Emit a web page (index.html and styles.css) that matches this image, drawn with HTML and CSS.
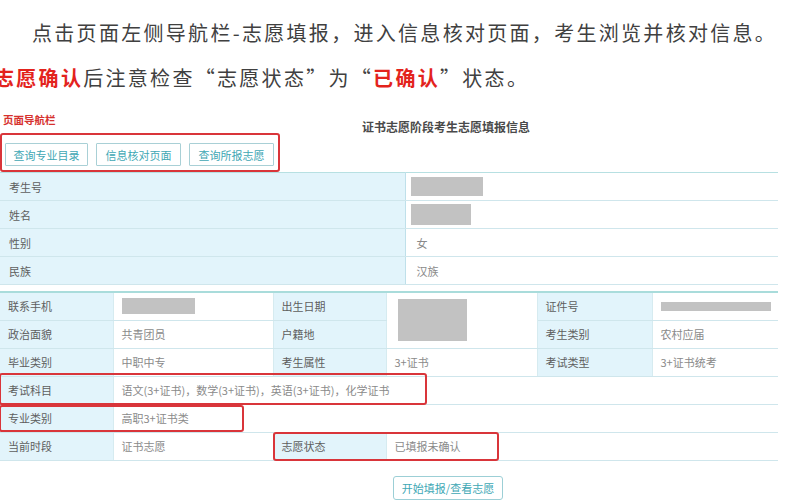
FILE: index.html
```html
<!DOCTYPE html>
<html lang="zh-CN">
<head>
<meta charset="utf-8">
<title>志愿填报信息</title>
<link rel="stylesheet" href="styles.css">
</head>
<body>
<div class="intro">
  <div class="line l1">点击页面左侧导航栏-志愿填报，进入信息核对页面，考生浏览并核对信息。</div>
  <div class="line l2"><b class="em">志愿确认</b>后注意检查“志愿状态”为“<b class="em">已确认</b>”状态。</div>
</div>
<div class="navhead">
  <div class="navlabel">页面导航栏</div>
  <div class="title">证书志愿阶段考生志愿填报信息</div>
</div>
<div class="navbox">
  <button class="navbtn w83">查询专业目录</button>
  <button class="navbtn">信息核对页面</button>
  <button class="navbtn">查询所报志愿</button>
</div>
<table class="t1">
  <colgroup><col class="c-l"><col></colgroup>
  <tr><td class="lab">考生号</td><td class="val redcell"><span class="redact r1"></span></td></tr>
  <tr><td class="lab">姓名</td><td class="val redcell"><span class="redact r2"></span></td></tr>
  <tr><td class="lab">性别</td><td class="val">女</td></tr>
  <tr><td class="lab">民族</td><td class="val">汉族</td></tr>
</table>
<div class="t2wrap">
  <table class="t2">
    <colgroup><col class="k1"><col class="k2"><col class="k3"><col class="k4"><col class="k5"><col class="k6"></colgroup>
    <tr><td class="lab">联系手机</td><td class="val"><span class="redact r3"></span></td><td class="lab">出生日期</td><td class="val redtall" rowspan="2"><span class="redact r4"></span></td><td class="lab">证件号</td><td class="val"><span class="redact r5"></span></td></tr>
    <tr><td class="lab">政治面貌</td><td class="val">共青团员</td><td class="lab">户籍地</td><td class="lab">考生类别</td><td class="val">农村应届</td></tr>
    <tr><td class="lab">毕业类别</td><td class="val">中职中专</td><td class="lab">考生属性</td><td class="val">3+证书</td><td class="lab">考试类型</td><td class="val">3+证书统考</td></tr>
    <tr><td class="lab">考试科目</td><td class="val" colspan="5">语文(3+证书)，数学(3+证书)，英语(3+证书)，化学证书</td></tr>
    <tr><td class="lab">专业类别</td><td class="val" colspan="5">高职3+证书类</td></tr>
    <tr><td class="lab">当前时段</td><td class="val">证书志愿</td><td class="lab">志愿状态</td><td class="val" colspan="3">已填报未确认</td></tr>
  </table>
  <div class="mark mark-a"></div>
  <div class="mark mark-b"></div>
  <div class="mark mark-c"></div>
</div>
<div class="actions"><button class="start">开始填报/查看志愿</button></div>
</body>
</html>
```
FILE: styles.css
```css
* { box-sizing: border-box; }
html, body { margin: 0; padding: 0; background: #fff; }
body { font-family: "Noto Sans CJK SC", "Noto Sans", sans-serif; overflow: hidden; width: 800px; height: 500px; }

.intro { padding-top: 10px; height: 100px; }
.line { font-size: 20px; line-height: 45px; letter-spacing: 2.3px; color: #404040; white-space: nowrap; }
.l1 { padding-left: 32px; }
.l2 { margin-left: -6px; }
.em { color: #e3231d; font-weight: bold; }

.navhead { display: grid; grid-template-columns: 362px 1fr; height: 33px; }
.navlabel { padding: 14px 0 0 3px; font-size: 10.5px; line-height: 12px; font-weight: bold; color: #d6312e; }
.title { padding-top: 20px; font-size: 12px; line-height: 14px; font-weight: bold; color: #4a4a4a; }

.navbox { width: 280px; height: 39px; border: 2px solid #d9353a; border-radius: 3px; display: flex; gap: 8px; padding: 8px 4px 0 3px; align-items: flex-start; }
.navbtn { width: 85px; height: 23px; border: 1px solid #a9d0d6; background: #fff; color: #40a7b4; font-family: inherit; font-size: 11px; padding: 0; border-radius: 1px; }
.navbtn.w83 { width: 83px; }

table { border-collapse: collapse; width: 778px; table-layout: fixed; font-size: 11px; }
td { height: 28px; padding: 0 0 0 8px; border-bottom: 1px solid #cfe6ec; white-space: nowrap; vertical-align: middle; }
.lab { background: #e2f4fb; color: #5e5e5e; }
.val { background: #fff; color: #8a8a8a; }

.t1 { border-top: 1px solid #b7e0e2; }
.t1 .c-l { width: 405px; }
.t1 .lab { padding-left: 9px; border-right: 1px solid #bfe0ea; }
.t1 .val { padding-left: 11px; }
.t1 .redcell { padding-left: 5px; }

.redact { display: block; background: #c2c2c2; }
.r1 { width: 72px; height: 19px; }
.r2 { width: 60px; height: 21px; }
.r3 { width: 73px; height: 16px; }
.r4 { width: 69px; height: 42px; margin-left: 3px; }
.r5 { width: 110px; height: 9px; }

.t2wrap { position: relative; margin-top: 6px; width: 778px; }
.t2 { border-top: 2px solid #a9dcdb; }
.t2 td { border-right: 1px solid #d6ebf0; }
.t2 td:last-child { border-right: none; }
.t2 .k1 { width: 113px; }
.t2 .k2 { width: 160px; }
.t2 .k3 { width: 113px; }
.t2 .k4 { width: 151px; }
.t2 .k5 { width: 115px; }
.t2 .k6 { width: 126px; }
.t2 .redtall { padding-left: 8px; }

.mark { position: absolute; border: 2px solid #d9353a; border-radius: 3px; }
.mark-a { left: -1px; top: 82px; width: 428px; height: 32px; }
.mark-b { left: -1px; top: 114px; width: 245px; height: 27px; }
.mark-c { left: 273px; top: 141px; width: 226px; height: 29px; }

.actions { padding: 13px 0 0 393px; }
.start { width: 110px; height: 24px; border: 1px solid #9ccfd6; border-radius: 3px; background: #fff; color: #3ea8b5; font-family: inherit; font-size: 11px; padding: 0; }
```
